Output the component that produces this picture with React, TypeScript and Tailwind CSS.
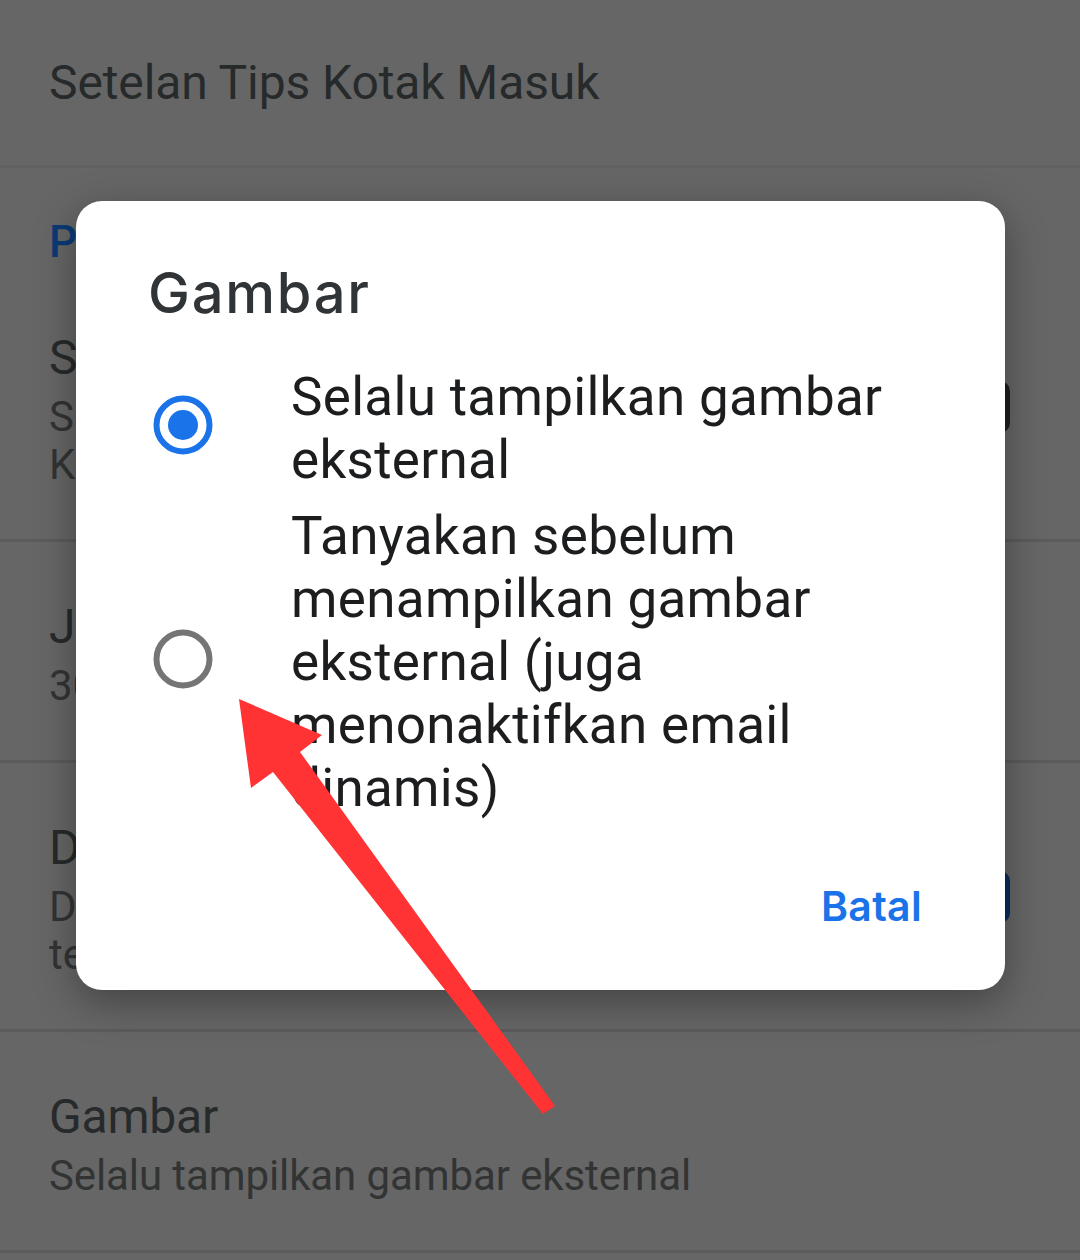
import React from "react";

const bodyFont = { fontFamily: "Roboto, 'Noto Sans', sans-serif" };
const headFont = { fontFamily: "Inter, 'Open Sans', sans-serif" };

function Divider() {
  return <div className="h-[3px] w-full bg-[#5b5b5b]" />;
}

function SettingRow({
  title,
  lines,
  toggle,
}: {
  title: string;
  lines: string[];
  toggle?: "dark" | "blue";
}) {
  return (
    <div className="relative flex items-start pl-[49px] pr-[70px] pt-[55px] pb-[50px]">
      <div className="flex-1 overflow-hidden">
        <div className="h-[60px] whitespace-nowrap text-[48px] leading-[60px] tracking-[-0.2px] text-[#262a2a]">
          {title}
        </div>
        <div className="mt-[5px]">
          {lines.map((l) => (
            <div
              key={l}
              className="h-[48px] whitespace-nowrap text-[42px] leading-[48px] tracking-[-0.1px] text-[#323434]"
            >
              {l}
            </div>
          ))}
        </div>
      </div>
      {toggle && (
        <div
          className={
            toggle === "dark"
              ? "mt-[53px] h-[52px] w-[84px] shrink-0 rounded-[10px] bg-[#1c2020]"
              : "mt-[53px] h-[52px] w-[84px] shrink-0 rounded-[10px] bg-[#0a2c5c]"
          }
        />
      )}
    </div>
  );
}

function Radio({ checked }: { checked: boolean }) {
  return (
    <svg width="60" height="60" viewBox="0 0 60 60" className="shrink-0">
      <circle
        cx="30"
        cy="30"
        r="26.5"
        fill="none"
        stroke={checked ? "#1a73e8" : "#757575"}
        strokeWidth="6"
      />
      {checked && <circle cx="30" cy="30" r="15" fill="#1a73e8" />}
    </svg>
  );
}

function Option({ checked, lines }: { checked: boolean; lines: string[] }) {
  return (
    <div className="flex items-center pl-[77px] pr-[40px]">
      <div className="-mt-[8px]">
        <Radio checked={checked} />
      </div>
      <div className="ml-[78px]">
        {lines.map((l) => (
          <div
            key={l}
            className="h-[63px] whitespace-nowrap text-[53px] leading-[63px] tracking-[0.3px] text-[#1c1d1f]"
          >
            {l}
          </div>
        ))}
      </div>
    </div>
  );
}

export default function App() {
  return (
    <div
      className="relative h-[1260px] w-[1080px] overflow-hidden bg-[#666666]"
      style={bodyFont}
    >
      {/* settings list behind the dialog scrim */}
      <div className="flex h-[165px] items-center pl-[49px] text-[48px] tracking-[-0.1px] text-[#262a2a]">
        Setelan Tips Kotak Masuk
      </div>
      <div className="h-[3px] w-full bg-[#616161]" />
      <div className="h-[105px] pl-[49px] pt-[49px] text-[44px] font-medium leading-[50px] text-[#0b3a75]">
        Penggunaan data
      </div>
      <SettingRow
        title="Sinkronkan Gmail"
        lines={["Sinkronkan email ke perangkat ini", "Kotak Masuk dan label"]}
        toggle="dark"
      />
      <Divider />
      <SettingRow title="Jumlah hari email yang disinkronkan" lines={["30 hari"]} />
      <Divider />
      <SettingRow
        title="Download lampiran"
        lines={["Download otomatis lampiran ke pesan", "terbaru via Wi-Fi"]}
        toggle="blue"
      />
      <Divider />
      <SettingRow title="Gambar" lines={["Selalu tampilkan gambar eksternal"]} />
      <Divider />

      {/* dialog */}
      <div className="absolute left-[76px] top-[201px] h-[789px] w-[929px] rounded-[26px] bg-white shadow-[0_12px_40px_rgba(0,0,0,0.35)]">
        <div
          className="mt-[60px] h-[64px] pl-[72px] text-[56px] font-medium leading-[64px] tracking-[1.8px] text-[#303437]"
          style={headFont}
        >
          Gambar
        </div>
        <div className="mt-[41px] flex flex-col gap-[13px]">
          <Option checked lines={["Selalu tampilkan gambar", "eksternal"]} />
          <Option
            checked={false}
            lines={[
              "Tanyakan sebelum",
              "menampilkan gambar",
              "eksternal (juga",
              "menonaktifkan email",
              "dinamis)",
            ]}
          />
        </div>
        <div className="mt-[61px] flex justify-end pr-[83px]">
          <div
            className="h-[50px] text-[41px] font-semibold leading-[50px] tracking-[0.3px] text-[#1a73e8]"
            style={headFont}
          >
            Batal
          </div>
        </div>
      </div>

      {/* annotation arrow */}
      <svg
        className="pointer-events-none absolute left-0 top-0"
        width="1080"
        height="1260"
        viewBox="0 0 1080 1260"
      >
        <polygon
          points="239,699 322,735 300,752 555,1106 543,1114 273,772 251,788"
          fill="#ff3333"
        />
      </svg>
    </div>
  );
}
